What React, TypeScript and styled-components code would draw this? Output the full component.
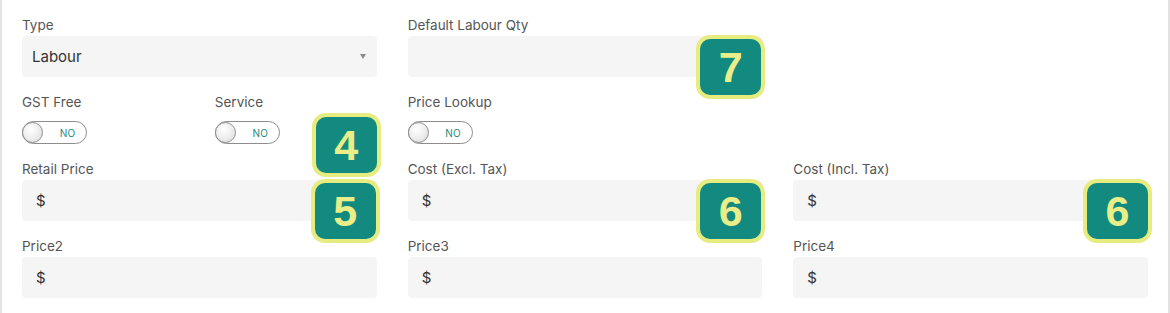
import React from 'react';
import styled, { createGlobalStyle } from 'styled-components';

const GlobalStyle = createGlobalStyle`
  html, body {
    margin: 0;
    padding: 0;
    background: #ffffff;
  }
`;

const Panel = styled.div`
  box-sizing: border-box;
  width: 1170px;
  height: 313px;
  border-left: 2px solid #e2e2e2;
  border-right: 2px solid #e2e2e2;
  padding: 16px 20px 0 20px;
  display: grid;
  grid-template-columns: repeat(6, 1fr);
  column-gap: 31px;
  row-gap: 16px;
  align-content: start;
  font-family: Inter, "Liberation Sans", Arial, sans-serif;
`;

const Field = styled.div<{ $span: number; $start?: number }>`
  position: relative;
  grid-column: ${(p) => (p.$start ? `${p.$start} / span ${p.$span}` : `span ${p.$span}`)};
  display: flex;
  flex-direction: column;
`;

const Label = styled.div`
  height: 18px;
  line-height: 18px;
  font-size: 13.5px;
  color: #555555;
  margin-bottom: 2px;
  white-space: nowrap;
`;

const InputBox = styled.div<{ $pad?: number }>`
  box-sizing: border-box;
  height: 41px;
  background: #f5f5f5;
  border-radius: 4px;
  display: flex;
  align-items: center;
  padding-left: ${(p) => p.$pad ?? 10}px;
  padding-right: 11px;
  font-size: 15px;
  color: #333333;
`;

const Value = styled.span`
  flex: 1;
`;

const Caret = styled.span`
  width: 0;
  height: 0;
  border-left: 3px solid transparent;
  border-right: 3px solid transparent;
  border-top: 5px solid #8a8a8a;
`;

const Toggle = styled.div`
  box-sizing: border-box;
  margin-top: 8px;
  width: 65px;
  height: 23px;
  border: 1px solid #8d8d8d;
  border-radius: 12px;
  background: #ffffff;
  display: flex;
  align-items: center;
`;

const Knob = styled.span`
  box-sizing: border-box;
  width: 21px;
  height: 21px;
  border-radius: 50%;
  border: 1px solid #8d8d8d;
  background: radial-gradient(circle at 40% 35%, #ffffff 0%, #f0f0f0 45%, #d8d8d8 100%);
  margin-left: -1px;
`;

const ToggleText = styled.span`
  flex: 1;
  text-align: center;
  font-size: 10px;
  color: #1e8a80;
  padding-left: 6px;
  letter-spacing: 0.2px;
`;

const Badge = styled.div<{ $top: number; $right: number }>`
  box-sizing: border-box;
  position: absolute;
  top: ${(p) => p.$top}px;
  right: ${(p) => p.$right}px;
  width: 69px;
  height: 64px;
  border: 4px solid #e6ec7f;
  border-radius: 14px;
  background: #128a7f;
  display: flex;
  align-items: center;
  justify-content: center;
  font-family: "Liberation Sans", Arial, sans-serif;
  font-weight: 700;
  font-size: 43px;
  color: #e9ee88;
  z-index: 2;
`;

const Switch = () => (
  <Toggle>
    <Knob />
    <ToggleText>NO</ToggleText>
  </Toggle>
);

const App = () => (
  <>
    <GlobalStyle />
    <Panel>
      <Field $span={2}>
        <Label>Type</Label>
        <InputBox>
          <Value>Labour</Value>
          <Caret />
        </InputBox>
      </Field>
      <Field $span={2}>
        <Label>Default Labour Qty</Label>
        <InputBox />
        <Badge $top={19} $right={-3}>7</Badge>
      </Field>

      <Field $span={1} $start={1}>
        <Label>GST Free</Label>
        <Switch />
      </Field>
      <Field $span={1}>
        <Label>Service</Label>
        <Switch />
        <Badge $top={20} $right={-4}>4</Badge>
      </Field>
      <Field $span={2}>
        <Label>Price Lookup</Label>
        <Switch />
      </Field>

      <Field $span={2} $start={1}>
        <Label>Retail Price</Label>
        <InputBox $pad={14}>$</InputBox>
        <Badge $top={19} $right={-3}>5</Badge>
      </Field>
      <Field $span={2}>
        <Label>Cost (Excl. Tax)</Label>
        <InputBox $pad={14}>$</InputBox>
        <Badge $top={19} $right={-3}>6</Badge>
      </Field>
      <Field $span={2}>
        <Label>Cost (Incl. Tax)</Label>
        <InputBox $pad={14}>$</InputBox>
        <Badge $top={19} $right={-4}>6</Badge>
      </Field>

      <Field $span={2}>
        <Label>Price2</Label>
        <InputBox $pad={14}>$</InputBox>
      </Field>
      <Field $span={2}>
        <Label>Price3</Label>
        <InputBox $pad={14}>$</InputBox>
      </Field>
      <Field $span={2}>
        <Label>Price4</Label>
        <InputBox $pad={14}>$</InputBox>
      </Field>
    </Panel>
  </>
);

export default App;
